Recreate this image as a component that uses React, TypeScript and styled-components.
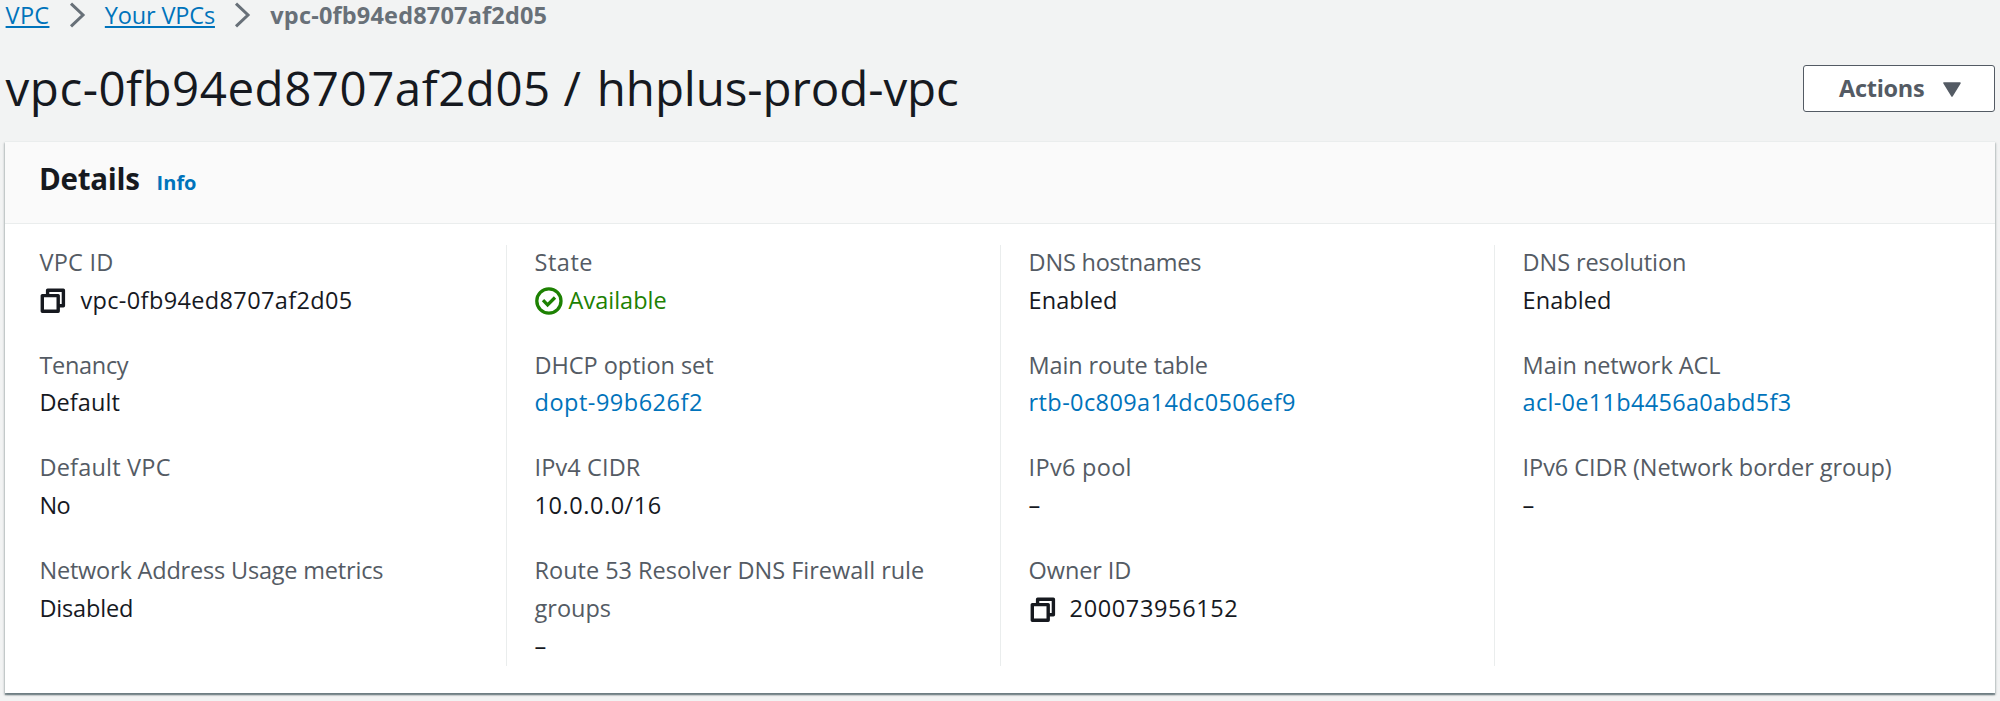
import React from "react";
import styled, { createGlobalStyle, css } from "styled-components";

const GlobalStyle = createGlobalStyle`
  * { box-sizing: border-box; }
  body {
    margin: 0;
    background: #f2f3f3;
    color: #16191f;
    font-family: "Open Sans", "Noto Sans", sans-serif;
    font-size: 23.5px;
    overflow: hidden;
  }
`;

const Tracked = styled.span<{ $track?: number }>`
  letter-spacing: ${(p) => p.$track ?? 0}px;
`;

const Page = styled.div`
  height: 701px;
  padding: 0 5px;
  overflow: hidden;
`;

const Breadcrumbs = styled.nav`
  display: flex;
  align-items: center;
  height: 30px;
  line-height: 30px;
  padding-left: 0.6px;
  white-space: nowrap;
`;

const CrumbLink = styled.a<{ $track?: number }>`
  color: #0073bb;
  letter-spacing: ${(p) => p.$track ?? 0}px;
  text-decoration: underline;
  text-decoration-thickness: 2px;
  text-decoration-skip-ink: none;
  text-underline-offset: 2px;
`;

const CurrentCrumb = styled.span`
  color: #687078;
  font-weight: 700;
  letter-spacing: 0.18px;
`;

const ChevronSvg = styled.svg`
  flex: none;
  width: 17px;
  height: 26px;
  margin: 0 19.2px;
`;

const TitleRow = styled.header`
  display: flex;
  justify-content: space-between;
  align-items: flex-start;
  height: 60px;
  margin: 28px 0 23px;
`;

const Title = styled.h1`
  margin: 0;
  padding-left: 0.6px;
  font-size: 47.5px;
  font-weight: 400;
  line-height: 60px;
  white-space: nowrap;
`;

const ResourceName = styled(Tracked)`
  margin-left: 3px;
`;

const ActionsButton = styled.button`
  display: flex;
  align-items: center;
  width: 192px;
  height: 47px;
  margin-top: 7px;
  padding: 0 0 2px 35px;
  border: 1.5px solid #545b64;
  border-radius: 3px;
  background: #fff;
  color: #545b64;
  font: 700 23.5px/30px "Open Sans", "Noto Sans", sans-serif;
  letter-spacing: -0.28px;
`;

const CaretSvg = styled.svg`
  width: 18px;
  height: 15px;
  margin: 4px 0 0 19px;
`;

const Card = styled.section`
  height: 552px;
  border-top: 1px solid #eaeded;
  background: #fff;
  box-shadow:
    0 2px 1px 0 rgba(0, 28, 36, 0.3),
    1px 2px 2px 0 rgba(0, 28, 36, 0.2),
    -1px 2px 2px 0 rgba(0, 28, 36, 0.2);
`;

const CardHeader = styled.div`
  display: flex;
  align-items: baseline;
  gap: 17px;
  height: 82px;
  padding: 17px 34px 0;
  border-bottom: 1px solid #eaeded;
  background: #fafafa;
`;

const CardTitle = styled.h2`
  margin: 0;
  font-size: 29.5px;
  font-weight: 700;
  line-height: 40px;
  letter-spacing: -0.28px;
`;

const InfoLink = styled.a`
  color: #0073bb;
  font-size: 20px;
  font-weight: 700;
`;

const Columns = styled.div`
  display: grid;
  grid-template-columns: 501px 494px 494px 1fr;
  height: 421px;
  margin-top: 20.5px;
`;

const Column = styled.div<{ $first?: boolean }>`
  ${(p) =>
    p.$first
      ? css`
          padding-left: 34.4px;
        `
      : css`
          padding-left: 27.6px;
          border-left: 1px solid #eaeded;
        `}
  padding-right: 27px;
`;

const FieldList = styled.dl`
  display: flex;
  flex-direction: column;
  gap: 27.43px;
  margin: -0.7px 0 0;
  line-height: 37.71px;
`;

const Label = styled.dt<{ $track?: number }>`
  color: #545b64;
  letter-spacing: ${(p) => p.$track ?? 0}px;
`;

const tones = { plain: "#16191f", link: "#0073bb", success: "#1d8102" };
type Tone = keyof typeof tones;

const Value = styled.dd<{ $track?: number; $tone: Tone }>`
  display: flex;
  align-items: center;
  height: 37.71px;
  margin: 0;
  color: ${(p) => tones[p.$tone]};
  letter-spacing: ${(p) => p.$track ?? 0}px;
`;

const CopySvg = styled.svg`
  flex: none;
  width: 26px;
  height: 26px;
  margin: 1.6px 14px 0 1px;
`;

const CheckSvg = styled.svg`
  flex: none;
  width: 28px;
  height: 28px;
  margin: 1.6px 6px 0 0;
`;

const Chevron = () => (
  <ChevronSvg viewBox="0 0 17 26" fill="none" stroke="#687078" strokeWidth="3">
    <path d="M2 1.6 14 13 2 24.4" />
  </ChevronSvg>
);

const CopyIcon = () => (
  <CopySvg viewBox="0 0 26 26" fill="none" stroke="#16191f" strokeWidth="3.4" strokeLinejoin="round">
    <path d="M2.3 7.6h15.9v15.7H2.3z" />
    <path d="M7.6 7V2.2h15.8v15.6H19" />
  </CopySvg>
);

const CheckIcon = () => (
  <CheckSvg viewBox="0 0 28 28" fill="none" stroke="#1d8102" strokeWidth="3.3">
    <circle cx="13.9" cy="14" r="12.1" />
    <path d="M8 13.2l4.6 4.6 7.4-7.3" />
  </CheckSvg>
);

interface Field {
  label: string;
  value: string;
  lt?: number;
  vt?: number;
  tone?: Tone;
  icon?: "copy" | "check";
}

const columns: Field[][] = [
  [
    { label: "VPC ID", lt: 0.24, value: "vpc-0fb94ed8707af2d05", vt: 0.37, icon: "copy" },
    { label: "Tenancy", lt: -0.3, value: "Default", vt: 0.08 },
    { label: "Default VPC", lt: 0.21, value: "No", vt: -0.6 },
    { label: "Network Address Usage metrics", lt: -0.19, value: "Disabled", vt: -0.16 },
  ],
  [
    { label: "State", lt: 0.5, value: "Available", tone: "success", icon: "check" },
    { label: "DHCP option set", lt: -0.05, value: "dopt-99b626f2", vt: 0.5, tone: "link" },
    { label: "IPv4 CIDR", lt: 0.11, value: "10.0.0.0/16", vt: 0.54 },
    { label: "Route 53 Resolver DNS Firewall rule groups", lt: -0.02, value: "–" },
  ],
  [
    { label: "DNS hostnames", lt: -0.22, value: "Enabled", vt: 0.05 },
    { label: "Main route table", lt: -0.13, value: "rtb-0c809a14dc0506ef9", vt: 0.4, tone: "link" },
    { label: "IPv6 pool", lt: 0.3, value: "–" },
    { label: "Owner ID", lt: -0.1, value: "200073956152", vt: 0.63, icon: "copy" },
  ],
  [
    { label: "DNS resolution", lt: -0.1, value: "Enabled", vt: 0.05 },
    { label: "Main network ACL", lt: -0.07, value: "acl-0e11b4456a0abd5f3", vt: 0.3, tone: "link" },
    { label: "IPv6 CIDR (Network border group)", lt: -0.07, value: "–" },
  ],
];

export default function App() {
  return (
    <>
      <GlobalStyle />
      <Page>
        <Breadcrumbs>
          <CrumbLink $track={0.3}>VPC</CrumbLink>
          <Chevron />
          <CrumbLink $track={-0.16}>Your VPCs</CrumbLink>
          <Chevron />
          <CurrentCrumb>vpc-0fb94ed8707af2d05</CurrentCrumb>
        </Breadcrumbs>
        <TitleRow>
          <Title>
            <Tracked $track={0.5}>vpc-0fb94ed8707af2d05 /</Tracked>{" "}
            <ResourceName $track={-0.1}>hhplus-prod-vpc</ResourceName>
          </Title>
          <ActionsButton>
            Actions
            <CaretSvg viewBox="0 0 18 15" fill="#545b64" stroke="#545b64" strokeWidth="1.5" strokeLinejoin="round">
              <path d="M1 1h16L9 14z" />
            </CaretSvg>
          </ActionsButton>
        </TitleRow>
        <Card>
          <CardHeader>
            <CardTitle>Details</CardTitle>
            <InfoLink>Info</InfoLink>
          </CardHeader>
          <Columns>
            {columns.map((fields, i) => (
              <Column key={i} $first={i === 0}>
                <FieldList>
                  {fields.map((f) => (
                    <div key={f.label}>
                      <Label $track={f.lt}>{f.label}</Label>
                      <Value $track={f.vt} $tone={f.tone ?? "plain"}>
                        {f.icon === "copy" && <CopyIcon />}
                        {f.icon === "check" && <CheckIcon />}
                        {f.value}
                      </Value>
                    </div>
                  ))}
                </FieldList>
              </Column>
            ))}
          </Columns>
        </Card>
      </Page>
    </>
  );
}
